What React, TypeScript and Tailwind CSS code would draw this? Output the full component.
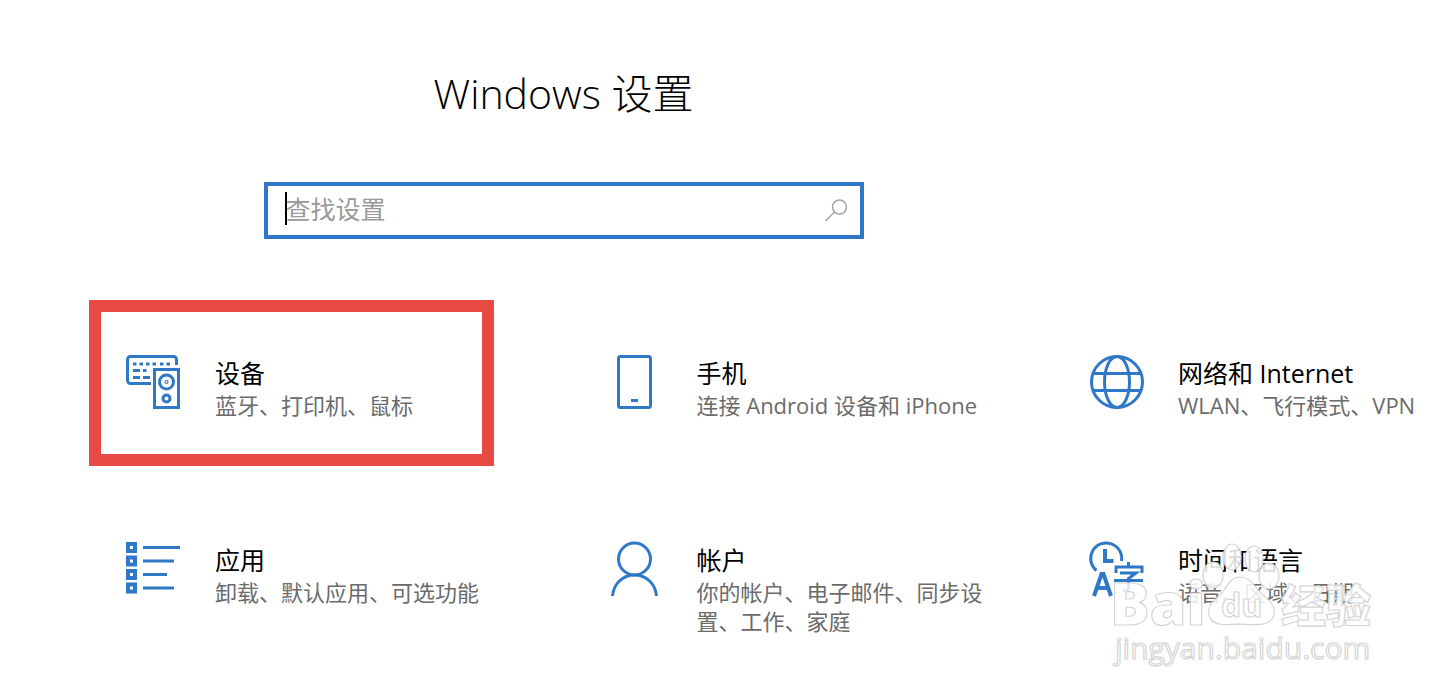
import type { ReactNode } from 'react';

const icons: Record<string, ReactNode> = {
  devices: (
    <>
      <path d="M25 28.500H4.500a3 3 0 0 1-3-3V4.500a3 3 0 0 1 3-3h43a3 3 0 0 1 3 3V10" />
      <path d="M7 9h3.500M13.500 9H17M20 9h3.500M26.500 9H30M34 9h3.500M40.500 9H44M7 15.500h7M17 15.500h3.500M7 22.500h7M17 22.500h7" />
      <rect x="28.500" y="14.500" width="24" height="38" />
      <circle cx="40.500" cy="27" r="7" />
      <circle cx="40.500" cy="27" r="0.600" />
      <circle cx="40.500" cy="43.500" r="3.500" />
    </>
  ),
  phone: (
    <>
      <rect x="10.500" y="1.500" width="32" height="51" rx="2" />
      <path d="M23 45.500h7" />
    </>
  ),
  network: (
    <>
      <circle cx="28" cy="27" r="25.500" />
      <ellipse cx="28" cy="27" rx="12.500" ry="25.500" />
      <path d="M4.500 18.500h47M4.500 35.500h47" />
    </>
  ),
  apps: (
    <>
      <path d="M2 2h7v7H2zM2 15.500h7v7H2zM2 29h7v7H2zM2 42.500h7v7H2z" strokeWidth="4" />
      <path d="M17 5.500h37M17 19h31M17 32.500h24M17 46h31" />
    </>
  ),
  accounts: (
    <>
      <circle cx="26.500" cy="17" r="16" />
      <path d="M4.500 54c1-12 10-21 22-21s21 9 22 21" />
    </>
  ),
  time: (
    <>
      <path d="M7.500 28.500A15.500 15.500 0 1 1 32.500 19" />
      <path d="M16 7v12h8.500" strokeWidth="4" />
      <path d="M5 54l7.500-22h2L22 54M8.500 46h10" strokeWidth="4" />
      <path d="M39.500 20v4M27 31v-6h26v6M31 31h16l-7.500 5.500v9c0 2-1 3-3 3h-3M25 38.500h29" />
    </>
  ),
};

const settings = [
  { icon: 'devices', title: '设备', detail: '蓝牙、打印机、鼠标', selected: true },
  { icon: 'phone', title: '手机', detail: '连接 Android 设备和 iPhone' },
  { icon: 'network', title: '网络和 Internet', detail: 'WLAN、飞行模式、VPN' },
  { icon: 'apps', title: '应用', detail: '卸载、默认应用、可选功能' },
  { icon: 'accounts', title: '帐户', detail: '你的帐户、电子邮件、同步设置、工作、家庭' },
  { icon: 'time', title: '时间和语言', detail: '语音、区域、日期' },
];

function SearchBox() {
  return (
    <form className="relative flex h-[57px] w-[600px] items-center border-4 border-[#2f78c8] pl-[18px] pr-3">
      <input
        type="text"
        aria-label="查找设置"
        placeholder="查找设置"
        className="min-w-0 flex-1 pb-1 text-[25px] leading-8 outline-none placeholder:text-[#999999]"
      />
      <span className="absolute left-[17px] top-[6px] h-[33px] w-[2px] bg-black" />
      <button type="submit" aria-label="搜索">
        <svg viewBox="0 0 24 24" className="size-6" fill="none" stroke="#a3a3a3" strokeWidth="1.5">
          <circle cx="15.500" cy="8" r="7" />
          <path d="M10.500 13L1.500 22" />
        </svg>
      </button>
    </form>
  );
}

function Watermark() {
  return (
    <div className="pointer-events-none absolute right-[70px] top-[535px] w-[270px]">
      <svg
        viewBox="0 0 270 140"
        className="w-full font-['Open_Sans','Noto_Sans_CJK_SC',sans-serif]"
        fill="#ffffff"
        fillOpacity="0.85"
        stroke="#d4d4d4"
        strokeWidth="1.2"
      >
        <ellipse cx="120" cy="22" rx="9" ry="13" />
        <ellipse cx="142" cy="24" rx="9" ry="13" />
        <ellipse cx="101" cy="40" rx="10" ry="13" />
        <ellipse cx="157" cy="41" rx="10" ry="13" />
        <path d="M128 42c-11 0-13 11-19 17-8 7-14 12-12 21 3 12 17 10 31 9 14 1 31 3 34-9 2-9-4-14-12-21-7-6-11-17-22-17z" />
        <text x="-2" y="90" fontSize="59" fontWeight="800">Bai</text>
        <text x="109" y="82" fontSize="32" fontWeight="700">du</text>
        <text x="169" y="88" fontSize="45" fontWeight="900">经验</text>
        <text x="3" y="124" fontSize="30" fontWeight="500">jingyan.baidu.com</text>
      </svg>
    </div>
  );
}

export default function App() {
  return (
    <main className="relative min-h-screen overflow-x-hidden bg-white pb-8 font-['Open_Sans','Noto_Sans_CJK_SC',sans-serif] text-black">
      <header className="flex flex-col items-center gap-[60px] pr-[325px] pt-16">
        <h1 className="text-[41px] font-light leading-[58px]">Windows 设置</h1>
        <SearchBox />
      </header>

      <nav className="mt-[61px] grid grid-cols-[1fr_1fr_400px] gap-x-[77px] gap-y-[21px] pl-[89px]">
        {settings.map((item) => (
          <a
            key={item.icon}
            href={`#${item.icon}`}
            className={`flex min-h-[166px] gap-[35px] border-[12px] pl-[25px] pt-[43px] ${item.selected ? 'border-[#e84a43]' : 'border-transparent'}`}
          >
            <svg viewBox="0 0 54 54" className="size-[54px] shrink-0 overflow-visible" fill="none" stroke="#2f78c8" strokeWidth="3">
              {icons[item.icon]}
            </svg>
            <div className="-mr-6 min-w-0 flex-1">
              <div className="text-[25px] leading-9">{item.title}</div>
              <div className="text-[22px] leading-[29px] text-[#6b6b6b]">{item.detail}</div>
            </div>
          </a>
        ))}
      </nav>

      <Watermark />
    </main>
  );
}
